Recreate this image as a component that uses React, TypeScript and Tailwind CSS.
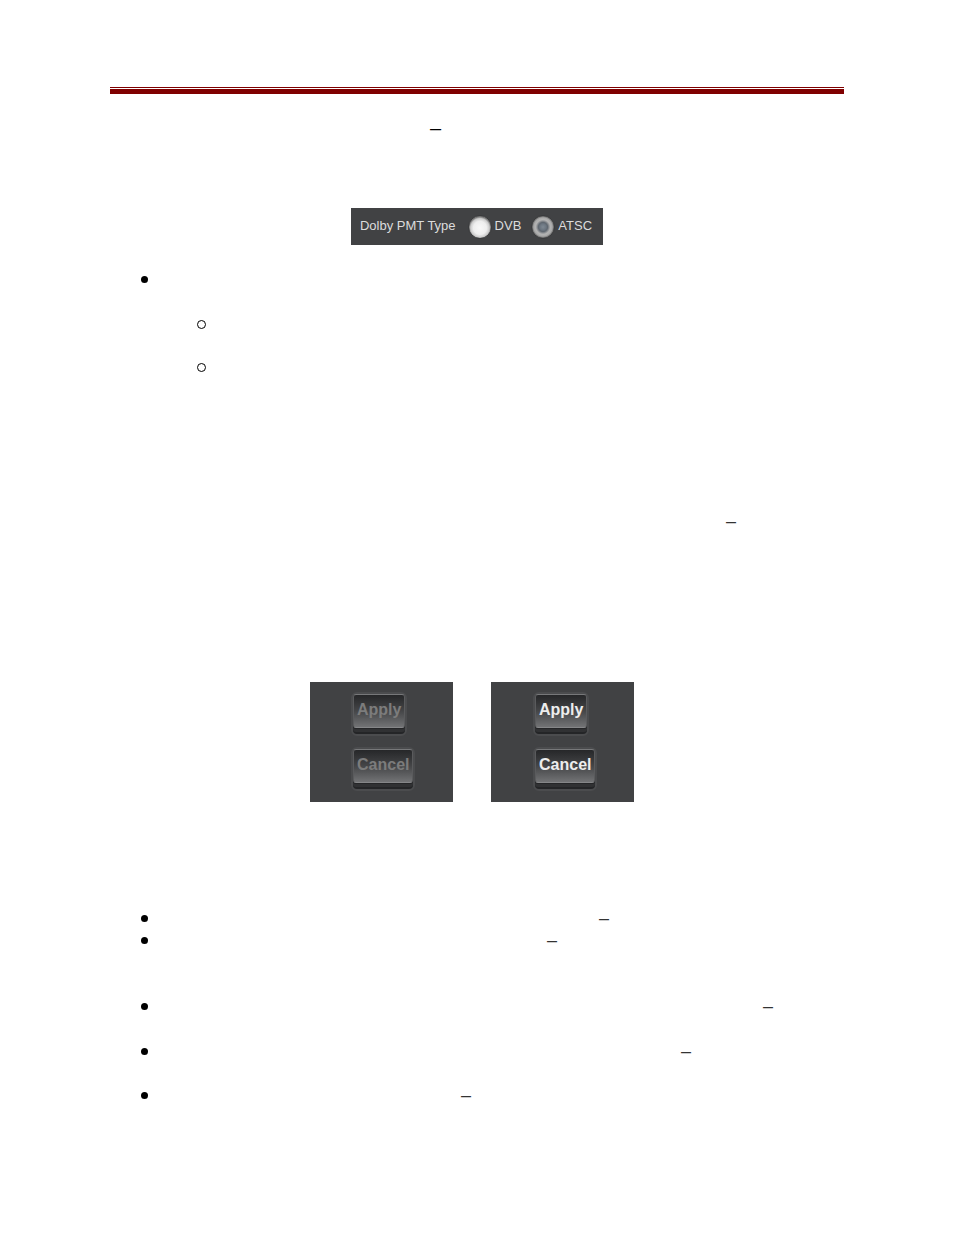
import { useState } from 'react';
import clsx from 'clsx';

const pmtTypes = ['DVB', 'ATSC'];

const notes = [
    { dash: 'pl-[451px]', gap: '' },
    { dash: 'pl-[399px]', gap: '' },
    { dash: 'pl-[615px]', gap: 'mt-11' },
    { dash: 'pl-[533px]', gap: 'mt-[23px]' },
    { dash: 'pl-[313px]', gap: 'mt-[22px]' },
];

function Dot() {
    return <span className="block size-[7px] shrink-0 rounded-full bg-black" />;
}

function Ring() {
    return <span className="block size-[9px] shrink-0 rounded-full border border-black" />;
}

function PmtType() {
    const [type, setType] = useState('ATSC');

    return (
        <div
            role="radiogroup"
            aria-labelledby="pmt-label"
            className="mx-auto mt-[66px] flex h-[37px] w-fit items-center bg-[#414244] pr-[11px] pl-[9px] pb-px text-[13px] text-[#dcdcdc]"
        >
            <span id="pmt-label" className="mr-3">Dolby PMT Type</span>
            {pmtTypes.map((name) => (
                <label key={name} className="mr-[10px] flex items-center gap-[3px] last:mr-0">
                    <input
                        type="radio"
                        name="pmt-type"
                        checked={type === name}
                        onChange={() => setType(name)}
                        className="mt-px size-6 appearance-none rounded-full border border-[#3a3b3d] bg-[radial-gradient(circle_11px_at_50%_54%,#f8f8f8_0%,#eeeeee_60%,#cccccc_85%,#777777_100%)] checked:bg-[radial-gradient(circle_11px,#7f8993_0%,#6c7681_28%,#5f6770_42%,#8c8f93_54%,#b4b4b4_66%,#a8a8a8_84%,#606060_100%)]"
                    />
                    <span>{name}</span>
                </label>
            ))}
        </div>
    );
}

function PanelButton({ label, disabled }: { label: string; disabled?: boolean }) {
    return (
        <button
            type="button"
            disabled={disabled}
            className="rounded-md border-2 border-[#4b4c4e] bg-[#242527] pb-[6px] text-base font-bold leading-6"
        >
            <span
                className={clsx(
                    'block rounded-[3px] border border-t-[#77787a] border-x-[#5a5b5d] border-b-[#858688] bg-linear-to-b from-[#262729] via-[#454648] to-[#727375] px-[3px] pt-[3px] pb-[5px] shadow-[0_1px_0_#242527,0_4px_0_#303133]',
                    disabled ? 'text-[#7c7c7c]' : 'text-[#ededed]'
                )}
            >
                {label}
            </span>
        </button>
    );
}

function ButtonPanel({ disabled }: { disabled?: boolean }) {
    return (
        <div
            className={clsx(
                'flex h-[120px] w-[143px] flex-col items-start gap-[11px] bg-[#414244] pt-[10px]',
                disabled ? 'pl-[41px]' : 'pl-[42px]'
            )}
        >
            <PanelButton label="Apply" disabled={disabled} />
            <PanelButton label="Cancel" disabled={disabled} />
        </div>
    );
}

export default function App() {
    return (
        <main className="min-h-screen bg-white px-[110px] pt-[87px] pb-32 font-['Liberation_Sans',Arial,sans-serif] text-black">
            <header>
                <div className="h-px bg-[#800000]" />
                <div className="mt-px h-[5px] bg-[#800000]" />
            </header>

            <h1 className="mt-5 pl-[320px] text-xl leading-7">–</h1>

            <PmtType />

            <ul className="mt-[23px] pl-[31px]">
                <li>
                    <div className="flex h-[22px] items-center"><Dot /></div>
                    <ul className="mt-[23px] pl-[56px]">
                        <li className="flex h-[22px] items-center"><Ring /></li>
                        <li className="mt-[21px] flex h-[22px] items-center"><Ring /></li>
                    </ul>
                </li>
            </ul>

            <h2 className="mt-[132px] pl-[616px] text-lg leading-[22px] text-[#333]">–</h2>

            <div className="mt-[150px] flex justify-center gap-[38px] pr-[10px]">
                <ButtonPanel disabled />
                <ButtonPanel />
            </div>

            <ul className="mt-[105px] pl-[31px] text-lg leading-[22px] text-[#333]">
                {notes.map((note) => (
                    <li key={note.dash} className={clsx('flex h-[22px] items-center', note.gap)}>
                        <Dot />
                        <span className={note.dash}>–</span>
                    </li>
                ))}
            </ul>
        </main>
    );
}
